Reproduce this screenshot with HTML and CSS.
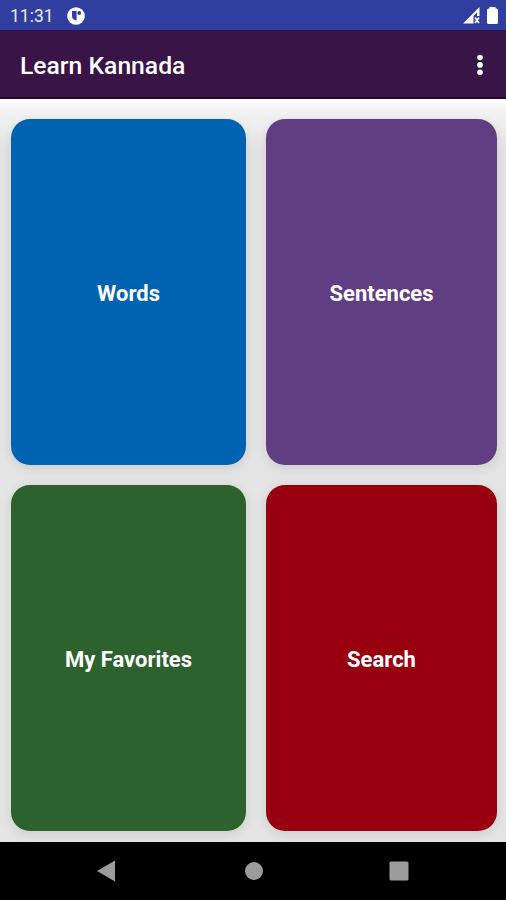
FILE: index.html
```
<!DOCTYPE html>
<html lang="en">
  <head>
    <meta charset="UTF-8" />
    <meta name="viewport" content="width=device-width, initial-scale=1.0" />
    <title>Learn Kannada</title>
    <link rel="stylesheet" href="styles.css">
  </head>
  <body>
    <div class="status-bar">
      <span class="time">11:31</span>
      <svg class="app-icon" width="18" height="18" viewBox="0 0 18 18">
        <circle cx="9" cy="9" r="8.8" fill="#fff" />
        <path d="M5 4h4.6v9.5C6.6 13 5 11.500 5 9z" fill="#303f9f" />
        <circle cx="12.200" cy="6" r="1.900" fill="#303f9f" />
      </svg>
      <svg class="signal" width="18" height="17" viewBox="0 0 18 17">
        <path d="M0 16.500 16.500 0V9H14V5.500L10.500 9v7.500z" fill="#fff" />
        <path d="M12 10.500l4 5.500M16 10.500l-4 5.500" stroke="#fff" stroke-width="1.700" />
      </svg>
      <svg class="battery" width="11" height="17" viewBox="0 0 11 17">
        <path d="M2.500 0h6v1.500h1Q11 1.500 11 3v12.500Q11 17 9.500 17h-8Q0 17 0 15.500V3Q0 1.500 1.500 1.500h1z" fill="#fff" />
      </svg>
    </div>

    <header class="toolbar">
      <h1>Learn Kannada</h1>
      <button class="menu" aria-label="More options">
        <svg width="8" height="22" viewBox="0 0 8 22">
          <circle cx="4" cy="3.500" r="2.800" />
          <circle cx="4" cy="10.900" r="2.800" />
          <circle cx="4" cy="18.300" r="2.800" />
        </svg>
      </button>
    </header>

    <main class="grid">
      <a class="card words">Words</a>
      <a class="card sentences">Sentences</a>
      <a class="card favorites">My Favorites</a>
      <a class="card search">Search</a>
    </main>

    <nav class="nav-bar">
      <svg width="18" height="22" viewBox="0 0 18 22"><path d="M0 11 18 .5v21z" /></svg>
      <svg class="home" width="18" height="18" viewBox="0 0 18 18"><circle cx="9" cy="9" r="9" /></svg>
      <svg width="20" height="20" viewBox="0 0 20 20"><rect x=".5" y=".5" width="19" height="19" rx="1.5" /></svg>
    </nav>
  </body>
</html>
```
FILE: styles.css
```
* {
  box-sizing: border-box;
}

body {
  display: flex;
  flex-direction: column;
  height: 900px;
  margin: 0;
  background-color: #e4e4e4;
  color: #fff;
  font-family: Roboto, sans-serif;
}

.status-bar {
  display: flex;
  align-items: center;
  height: 30px;
  padding: 1px 8px 0 10px;
  background-color: #303f9f;
}

.time {
  width: 57px;
  font-size: 17.5px;
  color: #e6e8f5;
}

.signal {
  margin-left: auto;
}

.battery {
  margin-left: 6px;
}

.toolbar {
  display: flex;
  align-items: center;
  justify-content: space-between;
  height: 69px;
  padding: 2px 22px 0 20px;
  background-color: #391446;
  border-bottom: 2px solid #21082b;
}

h1 {
  margin: 0;
  padding-top: 2px;
  font-size: 24.7px;
  font-weight: 500;
}

.menu {
  display: flex;
  padding: 0;
  background: none;
  border: none;
  fill: #fff;
}

.grid {
  flex: 1;
  display: grid;
  grid-template-columns: 235px 231px;
  grid-template-rows: 346px 346px;
  gap: 20px;
  padding: 20px 9px 0 11px;
  background: linear-gradient(#fdfdfd, #f4f4f4 10px, #e4e4e4 50px);
  overflow: hidden;
}

.card {
  display: flex;
  align-items: center;
  justify-content: center;
  padding-top: 2px;
  border-radius: 19px;
  box-shadow: 0 3px 12px rgba(0, 0, 0, 0.1);
  font-size: 22px;
  font-weight: 700;
}

.words {
  background-color: #0063b1;
}

.sentences {
  background-color: #613e82;
}

.favorites {
  background-color: #2d612e;
}

.search {
  background-color: #980010;
}

.nav-bar {
  display: flex;
  align-items: center;
  justify-content: space-between;
  height: 58px;
  padding: 0 97px;
  background-color: #000;
  fill: #9c9c9c;
}

.home {
  margin-left: 3px;
}
```
